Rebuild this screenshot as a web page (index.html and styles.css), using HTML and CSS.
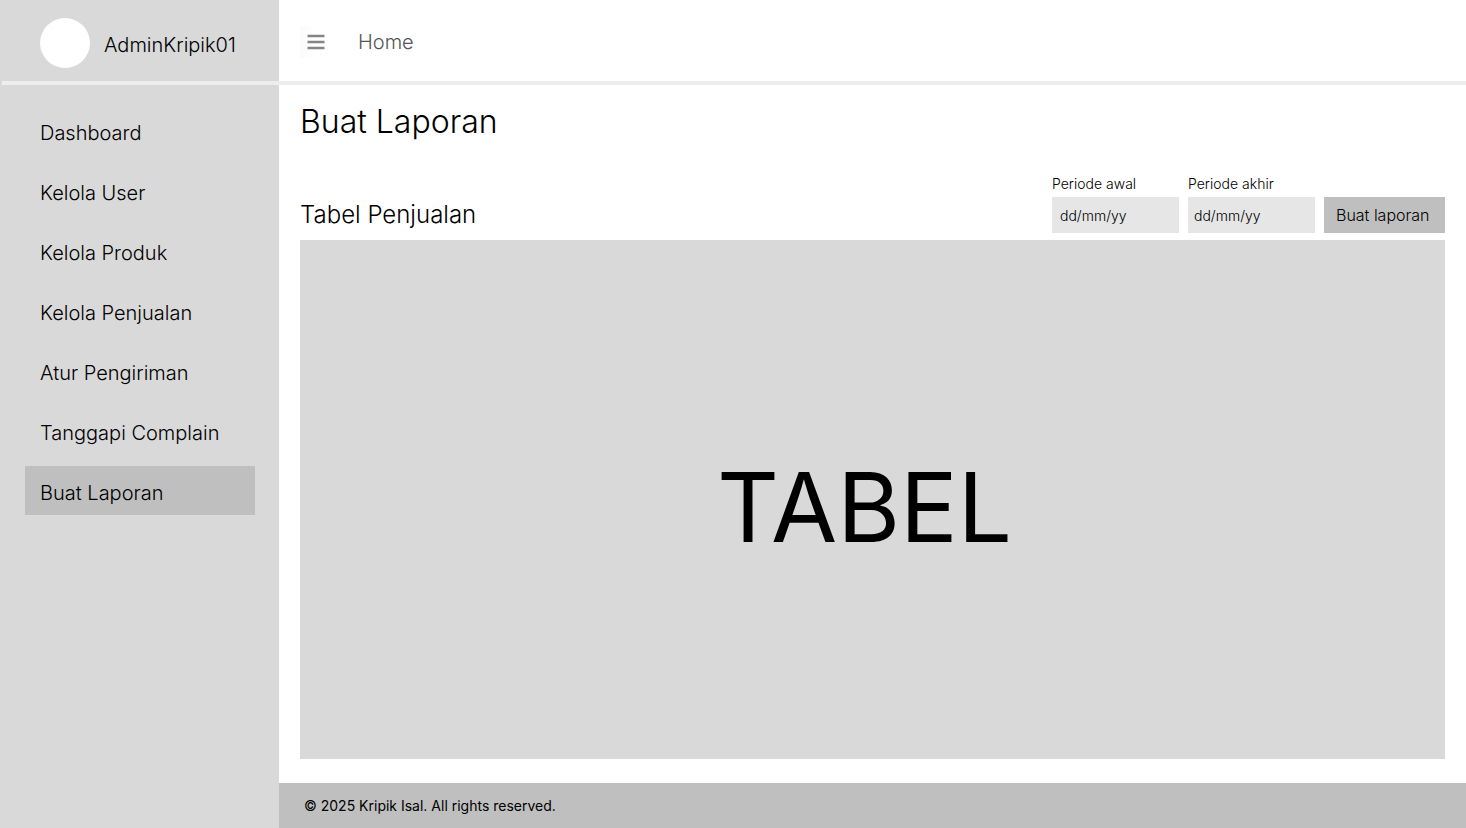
FILE: index.html
```html
<!DOCTYPE html>
<html lang="id">
<head>
<meta charset="utf-8">
<meta name="viewport" content="width=device-width, initial-scale=1">
<title>Buat Laporan</title>
<link rel="stylesheet" href="styles.css">
</head>
<body>
<div class="app">
  <header class="topbar">
    <div class="profile">
      <span class="avatar"></span>
      <span class="username">AdminKripik01</span>
    </div>
    <div class="toolbar">
      <button class="menu-button" type="button" aria-label="Menu">
        <svg class="menu-icon" viewBox="0 0 18 16" aria-hidden="true">
          <path d="M0.5 2h17M0.5 8h17M0.5 14h17" stroke="#858585" stroke-width="2.6" fill="none"/>
        </svg>
      </button>
      <a class="home-link" href="#">Home</a>
    </div>
  </header>
  <div class="divider"></div>
  <nav class="sidebar">
    <a class="nav-link" href="#">Dashboard</a>
    <a class="nav-link" href="#">Kelola User</a>
    <a class="nav-link" href="#">Kelola Produk</a>
    <a class="nav-link" href="#">Kelola Penjualan</a>
    <a class="nav-link" href="#">Atur Pengiriman</a>
    <a class="nav-link" href="#">Tanggapi Complain</a>
    <a class="nav-link active" href="#" aria-current="page">Buat Laporan</a>
  </nav>
  <main class="content">
    <h1 class="page-title">Buat Laporan</h1>
    <div class="section-head">
      <h2 class="section-title">Tabel Penjualan</h2>
      <form class="filters">
        <div class="field">
          <label class="label" for="start">Periode awal</label>
          <input class="input input-start" id="start" type="text" placeholder="dd/mm/yy">
        </div>
        <div class="field">
          <label class="label" for="end">Periode akhir</label>
          <input class="input" id="end" type="text" placeholder="dd/mm/yy">
        </div>
        <button class="submit" type="button">Buat laporan</button>
      </form>
    </div>
    <div class="table-area">TABEL</div>
  </main>
  <footer class="footer">© 2025 Kripik Isal. All rights reserved.</footer>
</div>
</body>
</html>
```
FILE: styles.css
```css
* { box-sizing: border-box; }

body {
  margin: 0;
  background: #fff;
  color: #000;
  font-family: Inter, "Liberation Sans", sans-serif;
  font-weight: 300;
}

a { color: inherit; text-decoration: none; }

.app {
  display: grid;
  grid-template-columns: 279px 1fr;
  grid-template-rows: auto auto 1fr auto;
  min-height: 100vh;
  background: linear-gradient(to right, #d9d9d9 279px, #fff 279px);
}

.topbar {
  grid-column: 1 / -1;
  display: grid;
  grid-template-columns: subgrid;
  height: 81px;
}

.divider {
  grid-column: 1 / -1;
  height: 4px;
  margin-left: 2px;
  background: #ededed;
}

.profile {
  display: flex;
  align-items: center;
  gap: 14px;
  padding: 5px 0 0 40px;
}

.avatar {
  width: 50px;
  height: 50px;
  border-radius: 50%;
  background: #fff;
}

.username { padding-top: 4px; font-size: 20px; }

.toolbar {
  display: flex;
  align-items: center;
  gap: 26px;
  padding: 3px 21px 0;
}

.menu-button {
  display: grid;
  place-items: center;
  width: 32px;
  height: 32px;
  padding: 0;
  border: 0;
  background: linear-gradient(to right, #fbfbfb, #fff 50%);
}

.menu-icon { width: 18px; height: 16px; }

.home-link { color: #555; font-size: 20px; }

.sidebar {
  grid-row: 3 / 5;
  display: flex;
  flex-direction: column;
  gap: 11px;
  padding: 21px 24px 21px 25px;
}

.nav-link {
  padding: 6px 15px 0;
  font-size: 20px;
  line-height: 43px;
}

.nav-link.active { background: #bfbfbf; }

.content {
  display: flex;
  flex-direction: column;
  padding: 17px 21px 24px;
}

.page-title { margin: 0; font-size: 32px; font-weight: 300; line-height: 40px; }

.section-head {
  display: flex;
  justify-content: space-between;
  align-items: flex-end;
  padding: 33px 0 7px;
}

.section-title { margin: 0; font-size: 24px; font-weight: 300; line-height: 36px; }

.filters { display: flex; align-items: flex-end; gap: 9px; }

.field { display: flex; flex-direction: column; gap: 4px; width: 127px; }

.label { font-size: 14px; line-height: 18px; }

.input {
  width: 100%;
  height: 36px;
  padding: 0 6px;
  border: 0;
  background: #e6e6e6;
  font: inherit;
  font-size: 14px;
}

.input-start { padding-left: 8px; }

.input::placeholder { color: #000; opacity: 1; }

.submit {
  height: 36px;
  width: 121px;
  padding: 0 12px;
  border: 0;
  background: #bfbfbf;
  color: #000;
  font: inherit;
  font-size: 16px;
  text-align: left;
  white-space: nowrap;
}

.table-area {
  flex: 1;
  display: grid;
  place-items: center;
  padding: 14px 16px 0 0;
  background: #d9d9d9;
  font-size: 96px;
  font-weight: 400;
}

.footer {
  padding: 0 25px;
  background: #bfbfbf;
  font-size: 14px;
  font-weight: 400;
  line-height: 45px;
}
```
